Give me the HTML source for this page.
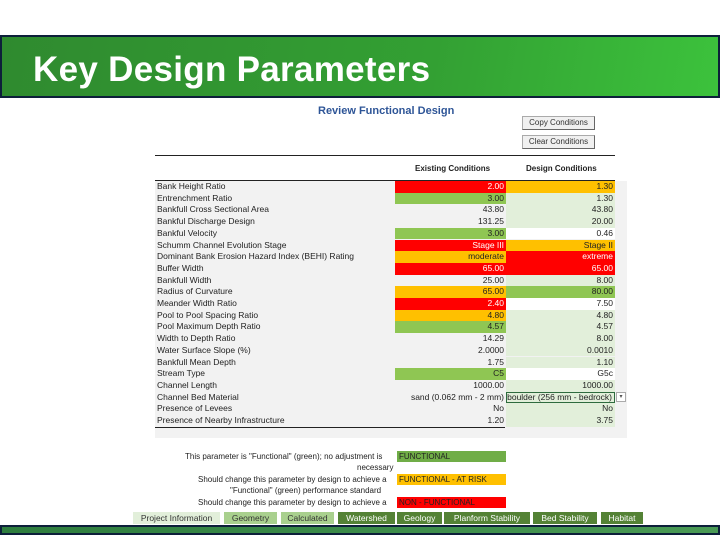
<!DOCTYPE html>
<html><head><meta charset="utf-8"><style>
*{margin:0;padding:0;box-sizing:border-box}
body{width:720px;height:540px;background:#fff;position:relative;overflow:hidden;font-family:"Liberation Sans",sans-serif}
.hdr{position:absolute;left:0;top:35px;width:720px;height:63px;border:2px solid #0d1f3a;background:linear-gradient(100deg,#2f8a2f 0%,#33a033 60%,#3cc23c 100%)}
.hdr span{position:absolute;left:31px;top:13px;color:#fff;font-size:35px;font-weight:bold;letter-spacing:0.3px}
.a{position:absolute;font-size:8.5px;color:#222;white-space:nowrap;line-height:11.6px}
.panel{position:absolute;left:155px;top:181px;width:472px;height:257px;background:#f2f2f2}
.row{position:absolute;left:155px;width:460px;height:11.7px}
.c{position:absolute;height:11.7px;font-size:8.5px;line-height:11.7px;text-align:right;padding-right:2px;color:#222}
.e{left:240px;width:111px}.d{left:351px;width:109px}
.lab{position:absolute;left:2px;font-size:8.5px;line-height:11.7px;color:#222}
.R{background:#ff0000;color:#fff}.O{background:#ffc000}.G{background:#8fc653}.L{background:#e2efda}.W{background:#fff}
.btn{position:absolute;left:522px;width:73px;height:14px;background:#f0f0f0;border:1px solid #aaa;border-right-color:#666;border-bottom-color:#666;font-size:8px;text-align:center;line-height:12px;color:#333}
.tab{position:absolute;top:512px;height:12px;font-size:8.5px;line-height:12px;text-align:center;color:#fff}
.foot{position:absolute;left:0;top:525px;width:720px;height:10px;border:2px solid #0d1f3a;background:linear-gradient(90deg,#2e7d3e,#4a9a55)}
</style></head><body>
<div class="hdr"><span>Key Design Parameters</span></div>
<div class="a" style="left:318px;top:106px;font-size:11px;font-weight:bold;color:#2e5597">Review Functional Design</div>
<div class="btn" style="top:116px">Copy Conditions</div>
<div class="btn" style="top:135px">Clear Conditions</div>
<div style="position:absolute;left:155px;top:155px;width:460px;height:1px;background:#222"></div>
<div class="a" style="left:415px;top:163px;font-weight:bold;font-size:8px">Existing Conditions</div>
<div class="a" style="left:526px;top:163px;font-weight:bold;font-size:8px">Design Conditions</div>
<div class="panel"></div>
<div style="position:absolute;left:155px;top:180px;width:460px;height:1px;background:#222"></div>
<div style="position:absolute;left:155px;top:427px;width:350px;height:1px;background:#222"></div>
<div class="row" style="top:181px"><span class="lab">Bank Height Ratio</span><div class="c e R">2.00</div><div class="c d O">1.30</div></div>
<div class="row" style="top:192.7px"><span class="lab">Entrenchment Ratio</span><div class="c e G">3.00</div><div class="c d L">1.30</div></div>
<div class="row" style="top:204.4px"><span class="lab">Bankfull Cross Sectional Area</span><div class="c e">43.80</div><div class="c d L">43.80</div></div>
<div class="row" style="top:216.1px"><span class="lab">Bankful Discharge Design</span><div class="c e">131.25</div><div class="c d L">20.00</div></div>
<div class="row" style="top:227.8px"><span class="lab">Bankful Velocity</span><div class="c e G">3.00</div><div class="c d W">0.46</div></div>
<div class="row" style="top:239.5px"><span class="lab">Schumm Channel Evolution Stage</span><div class="c e R">Stage III</div><div class="c d O">Stage II</div></div>
<div class="row" style="top:251.2px"><span class="lab">Dominant Bank Erosion Hazard Index (BEHI) Rating</span><div class="c e O">moderate</div><div class="c d R">extreme</div></div>
<div class="row" style="top:262.9px"><span class="lab">Buffer Width</span><div class="c e R">65.00</div><div class="c d R">65.00</div></div>
<div class="row" style="top:274.6px"><span class="lab">Bankfull Width</span><div class="c e">25.00</div><div class="c d L">8.00</div></div>
<div class="row" style="top:286.3px"><span class="lab">Radius of Curvature</span><div class="c e O">65.00</div><div class="c d G">80.00</div></div>
<div class="row" style="top:298px"><span class="lab">Meander Width Ratio</span><div class="c e R">2.40</div><div class="c d W">7.50</div></div>
<div class="row" style="top:309.7px"><span class="lab">Pool to Pool Spacing Ratio</span><div class="c e O">4.80</div><div class="c d L">4.80</div></div>
<div class="row" style="top:321.4px"><span class="lab">Pool Maximum Depth Ratio</span><div class="c e G">4.57</div><div class="c d L">4.57</div></div>
<div class="row" style="top:333.1px"><span class="lab">Width to Depth Ratio</span><div class="c e">14.29</div><div class="c d L">8.00</div></div>
<div class="row" style="top:344.8px"><span class="lab">Water Surface Slope (%)</span><div class="c e">2.0000</div><div class="c d L">0.0010</div></div>
<div class="row" style="top:356.5px"><span class="lab">Bankfull Mean Depth</span><div class="c e">1.75</div><div class="c d L">1.10</div></div>
<div class="row" style="top:368.2px"><span class="lab">Stream Type</span><div class="c e G">C5</div><div class="c d W">G5c</div></div>
<div class="row" style="top:379.9px"><span class="lab">Channel Length</span><div class="c e">1000.00</div><div class="c d L">1000.00</div></div>
<div class="row" style="top:391.6px"><span class="lab">Channel Bed Material</span><div class="c e">sand (0.062 mm - 2 mm)</div><div class="c d L" style="border:1px solid #2e6b3e;line-height:9.7px">boulder (256 mm - bedrock)</div><div style="position:absolute;left:461px;top:0;width:10px;height:10px;border:1px solid #aaa;background:#fff;font-size:6px;text-align:center;line-height:8px;color:#555">▾</div></div>
<div class="row" style="top:403.3px"><span class="lab">Presence of Levees</span><div class="c e">No</div><div class="c d L">No</div></div>
<div class="row" style="top:415px"><span class="lab">Presence of Nearby Infrastructure</span><div class="c e">1.20</div><div class="c d L">3.75</div></div>
<div class="a" style="left:185px;top:451px;font-size:8px">This parameter is "Functional" (green); no adjustment is</div>
<div class="a" style="left:357px;top:462px;font-size:8px">necessary</div>
<div class="a" style="left:198px;top:474px;font-size:8px">Should change this parameter by design to achieve a</div>
<div class="a" style="left:230px;top:485px;font-size:8px">"Functional" (green) performance standard</div>
<div class="a" style="left:198px;top:497px;font-size:8px">Should change this parameter by design to achieve a</div>
<div class="a" style="left:397px;top:451px;width:109px;height:11px;background:#70ad47;font-size:8px;padding-left:2px">FUNCTIONAL</div>
<div class="a" style="left:397px;top:474px;width:109px;height:11px;background:#ffc000;font-size:8px;padding-left:2px">FUNCTIONAL - AT RISK</div>
<div class="a" style="left:397px;top:497px;width:109px;height:11px;background:#ff0000;font-size:8px;padding-left:2px">NON - FUNCTIONAL</div>
<div class="tab" style="left:133px;width:87px;background:#e2efda;color:#333">Project Information</div>
<div class="tab" style="left:224px;width:53px;background:#a9d08e;color:#333">Geometry</div>
<div class="tab" style="left:281px;width:53px;background:#a9d08e;color:#333">Calculated</div>
<div class="tab" style="left:338px;width:57px;background:#548235">Watershed</div>
<div class="tab" style="left:397px;width:45px;background:#548235">Geology</div>
<div class="tab" style="left:444px;width:86px;background:#548235">Planform Stability</div>
<div class="tab" style="left:533px;width:64px;background:#548235">Bed Stability</div>
<div class="tab" style="left:601px;width:42px;background:#548235">Habitat</div>
<div class="foot"></div>
</body></html>
